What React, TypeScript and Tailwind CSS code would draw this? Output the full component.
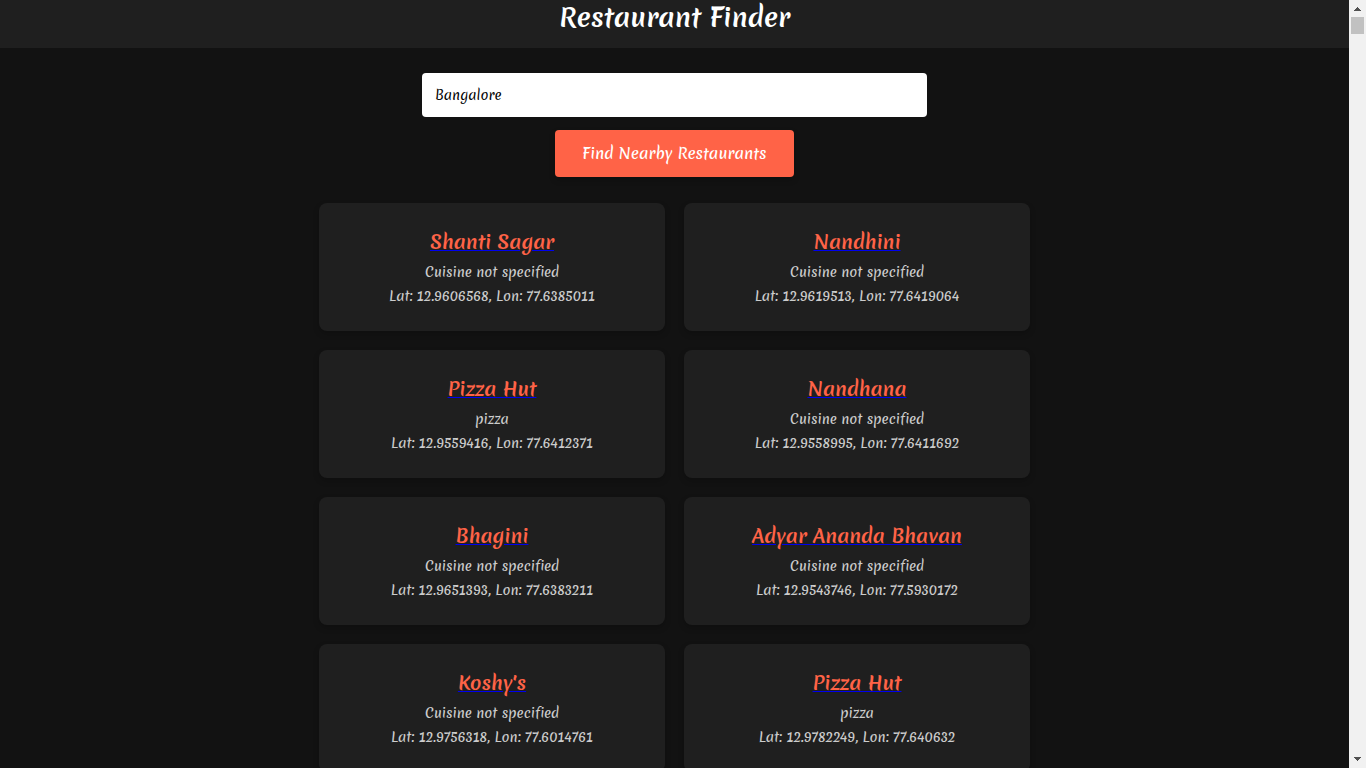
import { useState } from "react";

type Restaurant = { name: string; cuisine?: string; lat: string; lon: string };

const restaurants: Restaurant[] = [
  { name: "Shanti Sagar", lat: "12.9606568", lon: "77.6385011" },
  { name: "Nandhini", lat: "12.9619513", lon: "77.6419064" },
  { name: "Pizza Hut", cuisine: "pizza", lat: "12.9559416", lon: "77.6412371" },
  { name: "Nandhana", lat: "12.9558995", lon: "77.6411692" },
  { name: "Bhagini", lat: "12.9651393", lon: "77.6383211" },
  { name: "Adyar Ananda Bhavan", lat: "12.9543746", lon: "77.5930172" },
  { name: "Koshy's", lat: "12.9756318", lon: "77.6014761" },
  { name: "Pizza Hut", cuisine: "pizza", lat: "12.9782249", lon: "77.640632" },
];

function RestaurantCard({ name, cuisine, lat, lon }: Restaurant) {
  return (
    <li className="h-32 rounded-lg bg-[#1f1f1f] px-4 pt-6 text-center shadow-[0_3px_6px_rgba(0,0,0,0.2)]">
      <h2 className="mb-[3px] text-[19px] leading-[30px] font-bold">
        <a href={`https://www.openstreetmap.org/?mlat=${lat}&mlon=${lon}`} className="text-[#0000ee] underline">
          <span className="text-[#ff6347]">{name}</span>
        </a>
      </h2>
      <p className="text-[13px] leading-6 font-medium text-[#cccccc]">{cuisine ?? "Cuisine not specified"}</p>
      <p className="text-[13px] leading-6 font-medium text-[#cccccc]">
        Lat: {lat}, Lon: {lon}
      </p>
    </li>
  );
}

function ScrollTrack() {
  return (
    <div aria-hidden="true" className="flex w-[17px] shrink-0 flex-col items-center bg-[#f1f1f1]">
      <svg width="17" height="17" viewBox="0 0 17 17" shapeRendering="crispEdges" fill="#505050">
        <path d="M8 7h1v1h1v1h1v1h1v1H5v-1h1V9h1V8h1z" />
      </svg>
      <div className="h-[17px] w-[13px] bg-[#c1c1c1]" />
      <div className="grow" />
      <svg width="17" height="17" viewBox="0 0 17 17" shapeRendering="crispEdges" fill="#505050">
        <path d="M5 6h7v1h-1v1h-1v1H9v1H8V9H7V8H6V7H5z" />
      </svg>
    </div>
  );
}

export default function App() {
  const [city, setCity] = useState("Bangalore");

  return (
    <div className="flex h-screen overflow-hidden bg-[#121212] font-[Merienda,Lato,sans-serif]">
      <div className="min-w-0 grow">
        <header className="bg-[#1f1f1f] pb-[14px] text-center">
          <h1 className="text-[26px] leading-[34px] font-bold text-white">Restaurant Finder</h1>
        </header>
        <main className="mx-auto max-w-[711px] pt-[25px]">
          <form className="flex flex-col items-center gap-[13px]" onSubmit={(e) => e.preventDefault()}>
            <input
              type="text"
              aria-label="City"
              value={city}
              onChange={(e) => setCity(e.target.value)}
              className="h-11 w-full max-w-[505px] rounded bg-white px-[13px] text-[13px] text-black outline-none"
            />
            <button
              type="submit"
              className="h-[47px] rounded bg-[#ff6347] px-[27px] text-[15px] font-medium text-white shadow-[0_3px_6px_rgba(0,0,0,0.2)]"
            >
              Find Nearby Restaurants
            </button>
          </form>
          <ul className="mt-[26px] grid grid-cols-2 gap-[19px]">
            {restaurants.map((r) => (
              <RestaurantCard key={r.lat} {...r} />
            ))}
          </ul>
        </main>
      </div>
      <ScrollTrack />
    </div>
  );
}
